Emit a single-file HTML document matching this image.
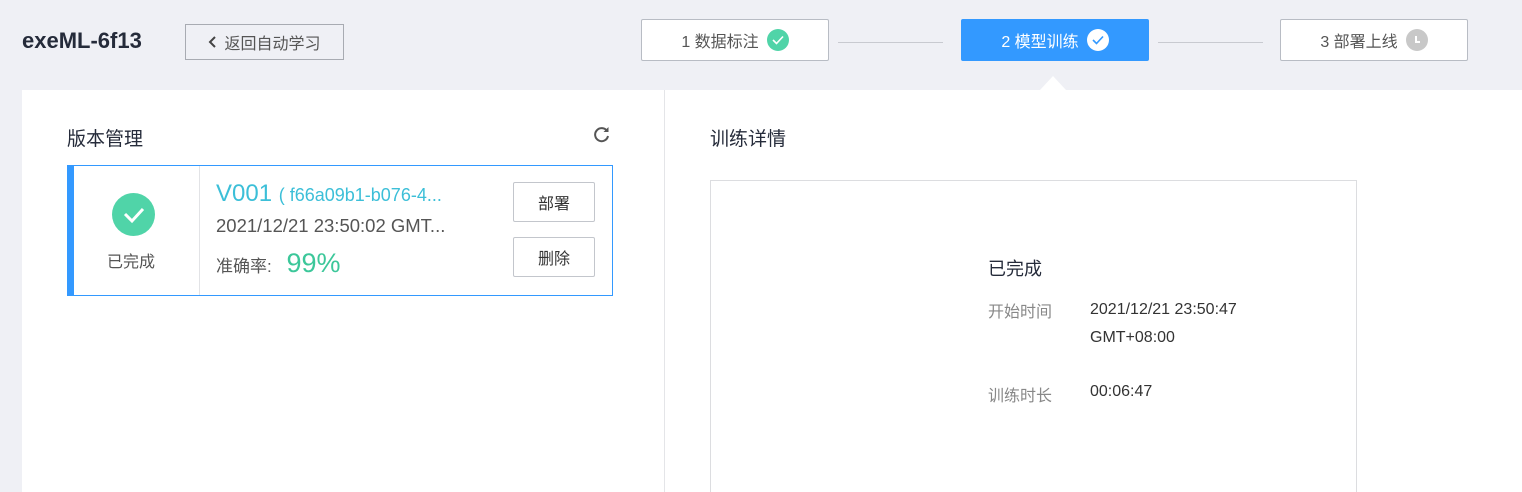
<!DOCTYPE html><html><head><meta charset="utf-8"><style>
*{margin:0;padding:0;box-sizing:border-box}
html,body{width:1522px;height:492px;overflow:hidden}
body{background:#eff0f5;font-family:"Liberation Sans","Noto Sans CJK SC",sans-serif;position:relative;color:#333}
.a{position:absolute}
.step{position:absolute;top:19px;height:42px;width:188px;border:1px solid #b8bcc4;border-radius:2px;background:#fff;font-size:16px;color:#555;display:flex;align-items:center;justify-content:center;gap:8px}
.ic{width:22px;height:22px;border-radius:50%;display:inline-flex;align-items:center;justify-content:center}
.btn{position:absolute;left:513px;width:82px;height:40px;border:1px solid #c3c6cc;border-radius:2px;font-size:16px;display:flex;align-items:center;justify-content:center;color:#333}
</style></head><body>
<div class="a" style="left:22px;top:28px;font-size:22px;font-weight:bold;color:#252b3a">exeML-6f13</div>
<div class="a" style="left:185px;top:24px;width:159px;height:36px;border:1px solid #a8abb2;font-size:16px;color:#555;display:flex;align-items:center;justify-content:center;gap:6px"><svg width="10" height="14"><path d="M7 2L2 7l5 5" stroke="#444" stroke-width="2" fill="none"/></svg>返回自动学习</div>
<div class="step" style="left:641px">1 数据标注 <span class="ic" style="background:#50d4a8"><svg width="12" height="10"><path d="M1 5l3.5 3.5L11 1.5" stroke="#fff" stroke-width="1.6" fill="none"/></svg></span></div>
<div class="a" style="left:838px;top:42px;width:105px;height:1px;background:#c8cad0"></div>
<div class="step" style="left:961px;background:#3399ff;border-color:#3399ff;color:#fff">2 模型训练 <span class="ic" style="background:#fff"><svg width="12" height="10"><path d="M1 5l3.5 3.5L11 1.5" stroke="#3399ff" stroke-width="1.6" fill="none"/></svg></span></div>
<div class="a" style="left:1158px;top:42px;width:105px;height:1px;background:#c8cad0"></div>
<div class="step" style="left:1280px">3 部署上线 <span class="ic" style="background:#c8c8c8"><svg width="12" height="12"><path d="M5 2v6h4" stroke="#fff" stroke-width="2" fill="none"/></svg></span></div>
<div class="a" style="left:22px;top:90px;width:1500px;height:402px;background:#fff"></div>
<div class="a" style="left:1040px;top:76px;width:0;height:0;border-left:13px solid transparent;border-right:13px solid transparent;border-bottom:14px solid #fff"></div>
<div class="a" style="left:664px;top:90px;width:1px;height:402px;background:#e4e5e8"></div>
<div class="a" style="left:67px;top:124px;font-size:19px;color:#252b3a">版本管理</div>
<svg class="a" style="left:593px;top:126px" width="18" height="18"><path d="M14 5A6.5 6.5 0 1 0 15 10" stroke="#555" stroke-width="2" fill="none"/><path d="M15.5 1v5h-5z" fill="#555"/></svg>
<div class="a" style="left:67px;top:165px;width:546px;height:131px;border:1px solid #3399ff"></div>
<div class="a" style="left:68px;top:166px;width:6px;height:129px;background:#3399ff"></div>
<div class="a" style="left:199px;top:166px;width:1px;height:129px;background:#e2e3e6"></div>
<div class="a" style="left:112px;top:193px;width:43px;height:43px;border-radius:50%;background:#50d4a8"><svg width="43" height="43"><path d="M13 21l7 7 11-12" stroke="#fff" stroke-width="3" fill="none"/></svg></div>
<div class="a" style="left:107px;top:248px;font-size:16px;color:#555">已完成</div>
<div class="a" style="left:216px;top:180px;font-size:24px;color:#3cbfd8">V001 <span style="font-size:18px">( f66a09b1-b076-4...</span></div>
<div class="a" style="left:216px;top:215px;font-size:18.5px;color:#555">2021/12/21 23:50:02 GMT...</div>
<div class="a" style="left:216px;top:248px;font-size:17px;color:#555">准确率: <span style="font-size:27px;color:#3cc79a;margin-left:10px">99%</span></div>
<div class="btn" style="top:182px">部署</div>
<div class="btn" style="top:237px">删除</div>
<div class="a" style="left:710px;top:124px;font-size:19px;color:#252b3a">训练详情</div>
<div class="a" style="left:710px;top:180px;width:647px;height:312px;border:1px solid #dcdde0;border-bottom:none"></div>
<div class="a" style="left:988px;top:255px;font-size:18px;color:#252b3a">已完成</div>
<div class="a" style="left:988px;top:298px;font-size:16px;color:#888">开始时间</div>
<div class="a" style="left:1090px;top:296px;font-size:16px;color:#333;line-height:28px">2021/12/21 23:50:47<br>GMT+08:00</div>
<div class="a" style="left:988px;top:382px;font-size:16px;color:#888">训练时长</div>
<div class="a" style="left:1090px;top:383px;font-size:16px;color:#333">00:06:47</div>
</body></html>
